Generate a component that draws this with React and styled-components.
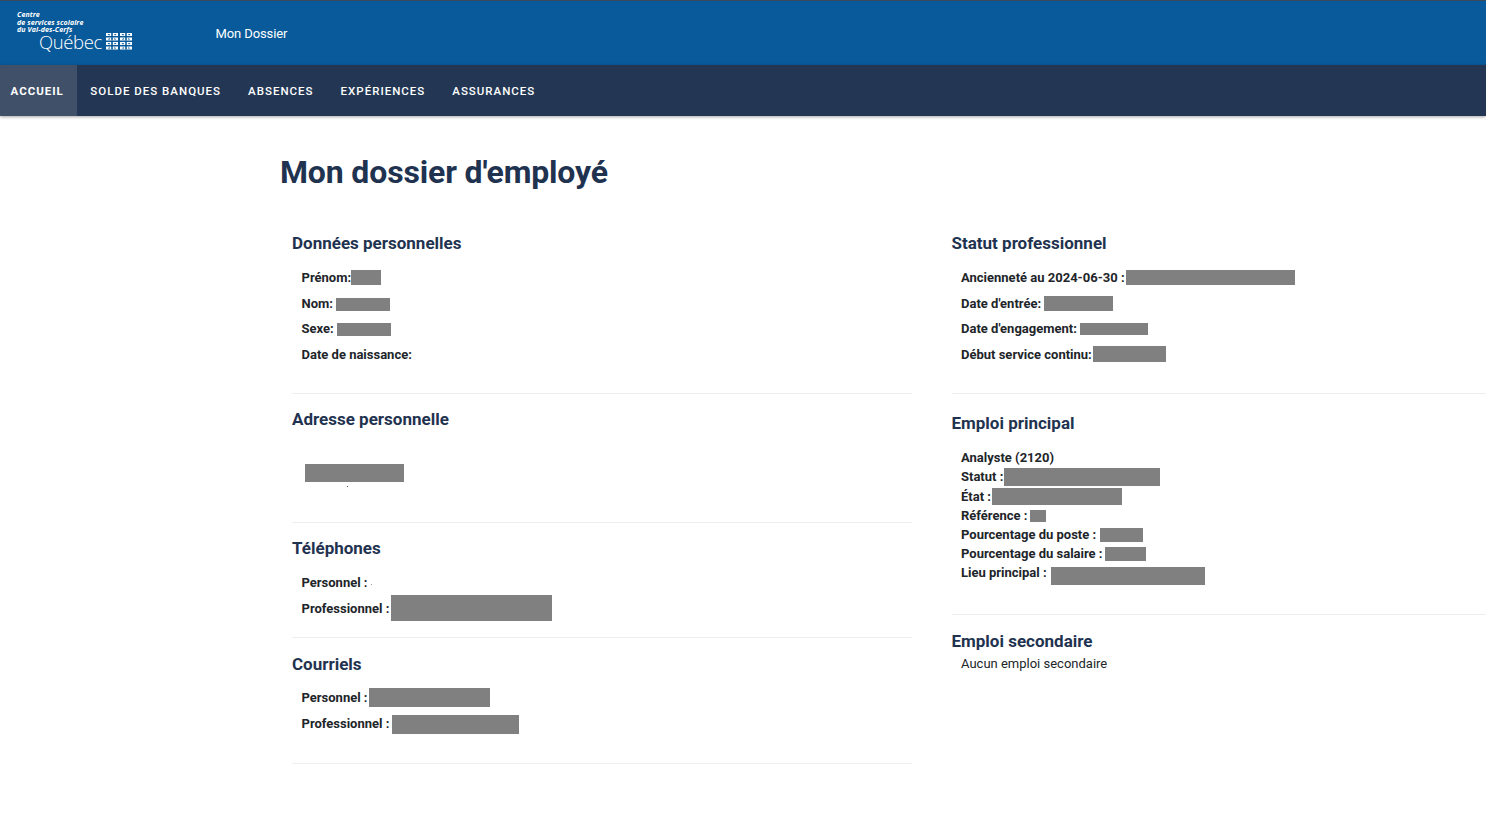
import React from "react";
import styled, { createGlobalStyle } from "styled-components";

const Global = createGlobalStyle`
  html, body { margin: 0; padding: 0; background: #fff; overflow: hidden; }
  body { font-family: Roboto, "Liberation Sans", sans-serif; color: #212529; }
`;

const Page = styled.div`
  width: 1486px;
  height: 827px;
  overflow: hidden;
`;
const TopBar = styled.header`
  height: 64px;
  background: #095a9a;
  border-top: 1px solid #3a4a5c;
  display: flex;
  align-items: center;
`;
const Logo = styled.div`
  width: 215.5px;
  height: 64px;
  padding: 10px 0 0 17px;
  box-sizing: border-box;
  color: #fff;
  flex: none;
`;
const LogoLine = styled.div`
  font: italic 700 7px/7.5px "Open Sans", sans-serif;
  letter-spacing: 0.12px;
`;
const LogoBottom = styled.div`
  display: flex;
  align-items: center;
  gap: 4px;
  margin-left: 22px;
  margin-top: -2px;
`;
const Wordmark = styled.span`
  font: 300 18.5px/19px "Open Sans", sans-serif;
  letter-spacing: -0.4px;
`;
const AppName = styled.div`
  color: #fff;
  font-size: 13px;
  letter-spacing: -0.1px;
`;
const Nav = styled.nav`
  height: 51px;
  background: #233754;
  display: flex;
  box-shadow: 0 1px 3px rgba(0, 0, 0, 0.35);
`;
const NavItem = styled.a`
  display: flex;
  align-items: center;
  padding: 0 13.5px;
  color: #fff;
  font-size: 11.5px;
  font-weight: ${(p) => (p.$active ? 700 : 500)};
  letter-spacing: 1px;
  text-transform: uppercase;
  background: ${(p) => (p.$active ? "#3f5068" : "transparent")};
  &:first-child { padding-left: 10.5px; padding-right: 13px; }
`;
const Main = styled.main`
  padding-left: 280px;
`;
const Title = styled.h1`
  margin: 0;
  padding-top: 36px;
  height: 95px;
  box-sizing: border-box;
  font-size: 32px;
  line-height: 40px;
  font-weight: 700;
  color: #1f3350;
  letter-spacing: -0.15px;
`;
const Columns = styled.div`
  display: grid;
  grid-template-columns: 620px 1fr;
  column-gap: 39.5px;
  padding-left: 12px;
`;
const Section = styled.section`
  height: ${(p) => p.$h}px;
  box-sizing: border-box;
  border-bottom: ${(p) => (p.$plain ? "none" : "1px solid #eeeeee")};
`;
const Heading = styled.h2`
  margin: 0;
  font-size: 17px;
  line-height: 24px;
  font-weight: 700;
  color: #1f3350;
  padding-top: ${(p) => p.$top || 0}px;
`;
const Rows = styled.div`
  padding: ${(p) => p.$top || 0}px 0 0 9.5px;
`;
const Row = styled.div`
  display: flex;
  align-items: center;
  height: ${(p) => p.$h}px;
  font-size: 13px;
  font-weight: ${(p) => (p.$normal ? 400 : 700)};
  color: #212529;
  white-space: nowrap;
`;
const Redact = styled.span`
  flex: none;
  display: inline-block;
  width: ${(p) => p.$w}px;
  height: ${(p) => p.$hh}px;
  margin-left: ${(p) => p.$ml || 0}px;
  background: #808080;
  position: relative;
  top: ${(p) => p.$dy || 0}px;
`;
const Address = styled.div`
  padding: 33px 0 0 13px;
`;
const AddressBlock = styled.div`
  width: 99px;
  height: 18px;
  background: #808080;
`;
const Speck = styled.div`
  width: 1px;
  height: 1px;
  margin: 4px 0 0 42px;
  background: #555;
`;
const Tiny = styled.span`
  width: 1px;
  height: 1px;
  margin: 3px 0 0 3px;
  background: #999;
`;

const Flag = () => (
  <svg width="26" height="17" viewBox="0 0 26 17">
    {[[0, 0], [14, 0], [0, 9], [14, 9]].map(([x, y]) => (
      <g key={`${x}-${y}`} transform={`translate(${x} ${y})`}>
        <rect width="12" height="7.5" fill="#fff" />
        <rect x="5.2" width="1.6" height="7.5" fill="#095a9a" />
        <rect y="3" width="12" height="1.5" fill="#095a9a" />
        <path d="M1.5 1h2l.5 1-1 .6zM8 1h2l.5 0-1.500 1.600zM1.700 6.500l1.700-1.500.8 1.500zM8 6.500l.600-1.500 1.700 1.500z" fill="#095a9a" />
      </g>
    ))}
  </svg>
);

const navItems = ["Accueil", "Solde des banques", "Absences", "Expériences", "Assurances"];

export default function App() {
  return (
    <Page>
      <Global />
      <TopBar>
        <Logo>
          <LogoLine>Centre</LogoLine>
          <LogoLine>de services scolaire</LogoLine>
          <LogoLine>du Val-des-Cerfs</LogoLine>
          <LogoBottom>
            <Wordmark>Québec</Wordmark>
            <Flag />
          </LogoBottom>
        </Logo>
        <AppName>Mon Dossier</AppName>
      </TopBar>
      <Nav>
        {navItems.map((n, i) => (
          <NavItem key={n} $active={i === 0}>{n}</NavItem>
        ))}
      </Nav>
      <Main>
        <Title>Mon dossier d'employé</Title>
        <Columns>
          <div>
            <Section $h={183}>
              <Heading $top={20}>Données personnelles</Heading>
              <Rows $top={10}>
                <Row $h={25.5}>Prénom:<Redact $w={30} $hh={15} /></Row>
                <Row $h={25.5}>Nom: <Redact $w={54} $hh={13} $ml={3} $dy={1} /></Row>
                <Row $h={25.5}>Sexe: <Redact $w={54} $hh={13} $ml={3} $dy={1} /></Row>
                <Row $h={25.5}>Date de naissance:</Row>
              </Rows>
            </Section>
            <Section $h={129}>
              <Heading $top={13}>Adresse personnelle</Heading>
              <Address>
                <AddressBlock />
                <Speck />
              </Address>
            </Section>
            <Section $h={115}>
              <Heading $top={13}>Téléphones</Heading>
              <Rows $top={10}>
                <Row $h={25.5}>Personnel :<Tiny /></Row>
                <Row $h={25.5}>Professionnel : <Redact $w={161} $hh={26} $ml={2} /></Row>
              </Rows>
            </Section>
            <Section $h={126}>
              <Heading $top={14}>Courriels</Heading>
              <Rows $top={9}>
                <Row $h={25.5}>Personnel : <Redact $w={121} $hh={19} $ml={1} /></Row>
                <Row $h={25.5}>Professionnel : <Redact $w={127} $hh={19} $ml={3} $dy={1} /></Row>
              </Rows>
            </Section>
          </div>
          <div>
            <Section $h={183}>
              <Heading $top={20}>Statut professionnel</Heading>
              <Rows $top={10}>
                <Row $h={25.5}>Ancienneté au 2024-06-30 : <Redact $w={169} $hh={15} $ml={1} /></Row>
                <Row $h={25.5}>Date d'entrée: <Redact $w={69} $hh={15} $ml={3} /></Row>
                <Row $h={25.5}>Date d'engagement: <Redact $w={68} $hh={12} $ml={3} /></Row>
                <Row $h={25.5}>Début service continu:<Redact $w={73} $hh={16} $ml={1} /></Row>
              </Rows>
            </Section>
            <Section $h={221}>
              <Heading $top={17}>Emploi principal</Heading>
              <Rows $top={13}>
                <Row $h={19}>Analyste (2120)</Row>
                <Row $h={19.5}>Statut : <Redact $w={156} $hh={18} $ml={1} /></Row>
                <Row $h={19.5}>État : <Redact $w={130} $hh={17} $ml={1} /></Row>
                <Row $h={19}>Référence : <Redact $w={16} $hh={12} $ml={2} /></Row>
                <Row $h={19}>Pourcentage du poste : <Redact $w={43} $hh={14} $ml={4} /></Row>
                <Row $h={19}>Pourcentage du salaire : <Redact $w={41} $hh={14} $ml={2} /></Row>
                <Row $h={19}>Lieu principal : <Redact $w={154} $hh={18} $ml={4} $dy={3} /></Row>
              </Rows>
            </Section>
            <Section $plain $h={80}>
              <Heading $top={14}>Emploi secondaire</Heading>
              <Rows>
                <Row $normal $h={20}>Aucun emploi secondaire</Row>
              </Rows>
            </Section>
          </div>
        </Columns>
      </Main>
    </Page>
  );
}
